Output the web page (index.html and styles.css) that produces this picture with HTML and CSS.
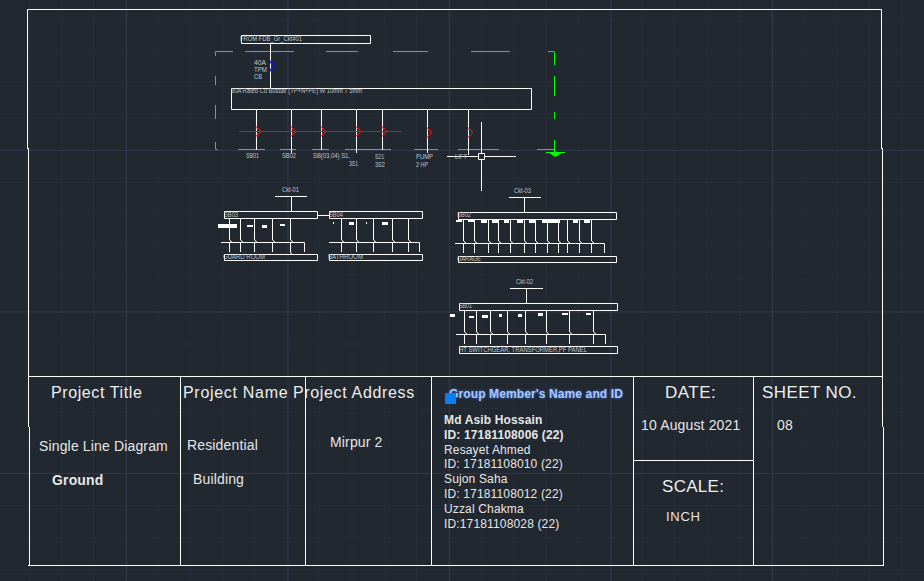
FILE: index.html
```html
<!DOCTYPE html>
<html lang="en">
<head>
<meta charset="utf-8">
<title>Single Line Diagram</title>
<link rel="stylesheet" href="styles.css">
</head>
<body>
<main class="stage">
  <svg class="drawing" width="924" height="581" viewBox="0 0 924 581" xmlns="http://www.w3.org/2000/svg">
    <defs>
      <pattern id="minor" width="32.3" height="32.3" patternUnits="userSpaceOnUse" x="28.5" y="20.5">
        <path class="grid-minor" d="M0.5 0V32.3M0 0.5H32.3"/>
      </pattern>
      <pattern id="major" width="161.5" height="161.5" patternUnits="userSpaceOnUse" x="126" y="150">
        <path class="grid-major" d="M0.5 0V161.5M0 0.5H161.5"/>
      </pattern>
      <path id="arc" d="M-1-4.5h1.5v1.5h1.5l1.5 1.5v3l-1.5 1.5h-1.5v1.5H-1"/>
    </defs>
    <rect width="924" height="581" fill="url(#minor)"/>
    <rect width="924" height="581" fill="url(#major)"/>

    <path class="green-dim" d="M215.5 56V51.5H233M245 51.5H294M326 51.5H358M393 51.5H428M471 51.5H510M548 51.5H554.5M215.5 76V85M215.5 105V119M215.5 142V149.5H218M238 149.5H265M280 149.5H296M312 149.5H329M345 149.5H391M414 149.5H438M458 149.5H499M537 149.5H554"/>
    <path class="green" d="M554.5 52V65M554.5 76V96M554.5 112V119M554.5 140V153M546 152.5H565"/>
    <path class="green-fill" d="M549 153H562L555.5 157Z"/>

    <path class="wire" d="M241.5 35.5H370.5V43.5H241.5ZM270.5 43.5V88.5M231.5 88.5H531.5V109.5H231.5Z"/>
    <path class="wire" d="M256.5 110V150M291.5 110V153M321.5 110V150M356.5 110V153M382.5 110V150M427.5 110V153M468.5 110V155"/>
    <use href="#arc" class="blue-arc" x="270.5" y="66"/>
    <path class="red-line" d="M239 131.5H402"/>
    <g class="red-arc">
      <use href="#arc" x="256.5" y="131.5"/>
      <use href="#arc" x="291.5" y="131.5"/>
      <use href="#arc" x="321.5" y="131.5"/>
      <use href="#arc" x="356.5" y="131.5"/>
      <use href="#arc" x="382.5" y="131.5"/>
      <use href="#arc" x="427.5" y="132.5"/>
      <use href="#arc" x="468.5" y="132.5"/>
    </g>

    <path class="wire" d="M447 156.5H478.5M484.5 156.5H516M481.5 122V153.5M481.5 159.5V191M478.5 153.5H484.5V159.5H478.5Z"/>

    <!-- Panels -->
    <path class="wire" d="M275 196.5H307M291.5 196.5V211.5M224.5 211.5H317.5V218.5H224.5ZM317.5 215.5H329.5M329.5 211.5H422.5V218.5H329.5ZM224.5 254.5H317.5V260.5H224.5ZM329.5 254.5H422.5V260.5H329.5ZM221 242.5H304.5V252M329 242.5H419.5V252"/>
    <path class="wire" d="M229.5 219V240l2 1.5-2 1.5V252M240.5 219V240l2 1.5-2 1.5V252M254.5 219V240l2 1.5-2 1.5V252M272.5 219V240l2 1.5-2 1.5V252M290.5 219V240l2 1.5-2 1.5V252l1 2"/>
    <path class="wire" d="M341.5 219V240l2 1.5-2 1.5V252M356.5 219V240l2 1.5-2 1.5V252M373.5 219V240l2 1.5-2 1.5V252M392.5 219V240l2 1.5-2 1.5V252M408.5 219V240l2 1.5-2 1.5V252"/>
    <path class="solid" d="M218 224h19v4h-19zM247 225h6v2h-6zM262 225h5v3h-5zM280 224h5v2h-5zM333 222h1v2h-1zM349 222h5v3h-5zM366 222h1v2h-1zM382 222h6v3h-6z"/>

    <path class="wire" d="M509 197.5H541M524.5 197.5V212.5M458.5 212.5H616.5V219.5H458.5ZM458.5 256.5H616.5V262.5H458.5ZM455 243.5H604.5V253"/>
    <path class="wire" d="M463.5 220V241l2 1.5-2 1.5V253M474.5 220V241l2 1.5-2 1.5V253M488.5 220V241l2 1.5-2 1.5V253M498.5 220V241l2 1.5-2 1.5V253M510.5 220V241l2 1.5-2 1.5V253M524.5 220V241l2 1.5-2 1.5V253M535.5 220V241l2 1.5-2 1.5V253M547.5 220V241l2 1.5-2 1.5V253M558.5 220V241l2 1.5-2 1.5V253M567.5 220V241l2 1.5-2 1.5V253M579.5 220V241l2 1.5-2 1.5V253M591.5 220V241l2 1.5-2 1.5V253"/>
    <path class="solid" d="M456 220h6v2h-6zM468 220h6v2h-6zM481 220h6v3h-6zM492 220h6v3h-6zM504 220h5v3h-5zM517 220h6v3h-6zM529 220h6v3h-6zM542 220h18v3h-18zM573 220h5v3h-5zM584 220h6v3h-6z"/>

    <path class="wire" d="M510 288.5H543M526.5 288.5V303.5M459.5 303.5H617.5V310.5H459.5ZM459.5 346.5H617.5V353.5H459.5ZM456 334.5H605.5V344"/>
    <path class="wire" d="M464.5 311V332l2 1.5-2 1.5V344M476.5 311V332l2 1.5-2 1.5V344M490.5 311V332l2 1.5-2 1.5V344M507.5 311V332l2 1.5-2 1.5V344M525.5 311V332l2 1.5-2 1.5V344M546.5 311V332l2 1.5-2 1.5V344M569.5 311V332l2 1.5-2 1.5V344M593.5 311V332l2 1.5-2 1.5V344"/>
    <path class="solid" d="M450 314h5v3h-5zM469 316h5v2h-5zM482 315h6v3h-6zM499 314h3v3h-3zM518 314h4v3h-4zM538 313h5v3h-5zM562 313h6v2h-6zM586 313h5v2h-5z"/>

    <!-- Small drawing labels -->
    <g class="label">
      <text x="240" y="41" textLength="62" lengthAdjust="spacingAndGlyphs">FROM FDB_Gr_Ckt#01</text>
      <text x="254" y="65" textLength="12" lengthAdjust="spacingAndGlyphs">40A</text>
      <text x="254" y="72" textLength="13" lengthAdjust="spacingAndGlyphs">TPM</text>
      <text x="254" y="79" textLength="8" lengthAdjust="spacingAndGlyphs">CB</text>
      <text x="231" y="93" textLength="131" lengthAdjust="spacingAndGlyphs">80A Rated Cu Busbar (TP+N+PE) W 10mm T 5mm</text>
      <text x="246" y="158" textLength="13" lengthAdjust="spacingAndGlyphs">SB01</text>
      <text x="282" y="158" textLength="14" lengthAdjust="spacingAndGlyphs">SB02</text>
      <text x="313" y="158" textLength="37" lengthAdjust="spacingAndGlyphs">SB(03,04) S1,</text>
      <text x="349" y="166" textLength="9" lengthAdjust="spacingAndGlyphs">3S1</text>
      <text x="375" y="159" textLength="9" lengthAdjust="spacingAndGlyphs">S21</text>
      <text x="375" y="167" textLength="10" lengthAdjust="spacingAndGlyphs">3S2</text>
      <text x="416" y="159" textLength="17" lengthAdjust="spacingAndGlyphs">PUMP</text>
      <text x="416" y="167" textLength="12" lengthAdjust="spacingAndGlyphs">2 HP</text>
      <text x="455" y="159" textLength="12" lengthAdjust="spacingAndGlyphs">LIFT</text>
      <text x="282" y="192" textLength="17" lengthAdjust="spacingAndGlyphs">Ckt-01</text>
      <text x="224" y="217" textLength="14" lengthAdjust="spacingAndGlyphs">SB03</text>
      <text x="329" y="217" textLength="14" lengthAdjust="spacingAndGlyphs">SB04</text>
      <text x="223" y="259" textLength="42" lengthAdjust="spacingAndGlyphs">GUARD ROOM</text>
      <text x="328" y="259" textLength="35" lengthAdjust="spacingAndGlyphs">BATHROOM</text>
      <text x="514" y="193" textLength="17" lengthAdjust="spacingAndGlyphs">Ckt-03</text>
      <text x="457" y="217" textLength="14" lengthAdjust="spacingAndGlyphs">SB02</text>
      <text x="457" y="261" textLength="24" lengthAdjust="spacingAndGlyphs">GARAGE</text>
      <text x="516" y="284" textLength="17" lengthAdjust="spacingAndGlyphs">Ckt-02</text>
      <text x="459" y="308" textLength="13" lengthAdjust="spacingAndGlyphs">SB01</text>
      <text x="459" y="351.5" textLength="128" lengthAdjust="spacingAndGlyphs">HT SWITCHGEAR, TRANSFORMER,PF PANEL</text>
    </g>

    <!-- Sheet frame -->
    <path class="wire" d="M27.5 149V9.5H881.5V149M28.5 148V427M29.5 427V565M882.5 148V427M883.5 427V566"/>
  </svg>

  <section class="title-block">
    <div class="cell">
      <h2 class="head head-title">Project Title</h2>
      <p class="body-text single">Single Line Diagram</p>
      <p class="body-text ground">Ground</p>
    </div>
    <div class="cell">
      <h2 class="head head-name">Project Name</h2>
      <p class="body-text residential">Residential</p>
      <p class="body-text building">Building</p>
    </div>
    <div class="cell">
      <h2 class="head head-address">Project Address</h2>
      <p class="body-text mirpur">Mirpur 2</p>
    </div>
    <div class="cell">
      <h2 class="group-head">Group Member's Name and ID</h2>
      <span class="handle"></span>
      <ul class="members">
        <li class="strong">Md Asib Hossain</li>
        <li class="strong">ID: 17181108006 (22)</li>
        <li>Resayet Ahmed</li>
        <li>ID: 17181108010 (22)</li>
        <li>Sujon Saha</li>
        <li>ID: 17181108012 (22)</li>
        <li>Uzzal Chakma</li>
        <li>ID:17181108028 (22)</li>
      </ul>
    </div>
    <div class="cell cell-split">
      <div class="date">
        <h2 class="head head-date">DATE:</h2>
        <p class="body-text date-value">10 August 2021</p>
      </div>
      <div class="scale">
        <h2 class="head head-scale">SCALE:</h2>
        <p class="body-text scale-value">INCH</p>
      </div>
    </div>
    <div class="cell cell-last">
      <h2 class="head head-sheet">SHEET NO.</h2>
      <p class="body-text sheet-value">08</p>
    </div>
  </section>
</main>
</body>
</html>
```

FILE: styles.css
```css
* { box-sizing: border-box; }
html, body { margin: 0; padding: 0; }
body { background: #212830; overflow: hidden; }
.stage { position: relative; width: 924px; height: 581px; background: #212830; overflow: hidden; font-family: "Liberation Sans", Arial, sans-serif; color: #e6e6e6; }
.drawing { position: absolute; left: 0; top: 0; display: block; }

.grid-minor { stroke: #272d38; stroke-width: 1; fill: none; }
.grid-major { stroke: #31364a; stroke-width: 1; fill: none; }
.wire { stroke: #fff; stroke-width: 1; fill: none; }
.solid { fill: #fff; }
.green { stroke: #00ff00; stroke-width: 1; fill: none; }
.green-dim { stroke: #22d822; stroke-width: 1; fill: none; }
.green-fill { fill: #00ff00; }
.red-line { stroke: #c81818; stroke-width: 1; fill: none; }
.red-arc { stroke: #ff1010; stroke-width: 1; fill: none; }
.blue-arc { stroke: #1414f0; stroke-width: 1.3; fill: none; }
.label { font-size: 6.5px; fill: #c4c4c4; font-family: "Liberation Sans", Arial, sans-serif; }

.title-block { position: absolute; left: 28px; top: 376px; width: 855px; height: 190px; display: grid; grid-template-columns: 153px 125px 126px 202px 120px 129px; border-top: 1px solid #fff; border-bottom: 1px solid #fff; }
.cell { position: relative; border-right: 1px solid #fff; min-width: 0; }
.cell-last { border-right: 0; }
.cell-split { display: grid; grid-template-rows: 84px 1fr; }
.date { border-bottom: 1px solid #fff; }

.head { margin: 0; font-weight: 400; font-size: 16px; line-height: 20px; white-space: nowrap; color: #eee; }
.body-text { margin: 0; font-size: 14px; line-height: 16px; letter-spacing: 0.15px; white-space: nowrap; color: #e6e6e6; }

.head-title { padding: 6px 0 0 23px; letter-spacing: 0.6px; }
.single { margin: 35px 0 0 11px; }
.ground { margin: 18px 0 0 24px; font-weight: 700; }
.head-name { padding: 6px 0 0 2px; letter-spacing: 0.7px; }
.residential { margin: 34px 0 0 6px; }
.building { margin: 18px 0 0 12px; }
.head-address { margin-left: -13px; padding-top: 6px; letter-spacing: 0.65px; }
.mirpur { margin: 31px 0 0 24px; }

.group-head { margin: 0; padding: 10px 0 0 17px; font-size: 12px; line-height: 15px; font-weight: 700; letter-spacing: 0.12px; white-space: nowrap; color: #a9c8ff; text-shadow: 0 0 3px #3f78e0; }
.handle { position: absolute; left: 13px; top: 16px; width: 11px; height: 11px; background: #0a80f5; }
.members { list-style: none; margin: 11px 0 0; padding: 0 0 0 12px; font-size: 12px; line-height: 14.8px; letter-spacing: 0.15px; white-space: nowrap; color: #e6e6e6; }
.strong { font-weight: 700; }

.head-date { padding: 6px 0 0 31px; font-size: 17px; letter-spacing: 0.5px; }
.date-value { margin: 14px 0 0 7px; }
.head-scale { padding: 16px 0 0 28px; font-size: 17px; letter-spacing: 0.3px; }
.scale-value { margin: 12px 0 0 32px; font-size: 13px; letter-spacing: 0.7px; }
.head-sheet { padding: 6px 0 0 8px; font-size: 17px; letter-spacing: 0.4px; }
.sheet-value { margin: 14px 0 0 23px; }
```
